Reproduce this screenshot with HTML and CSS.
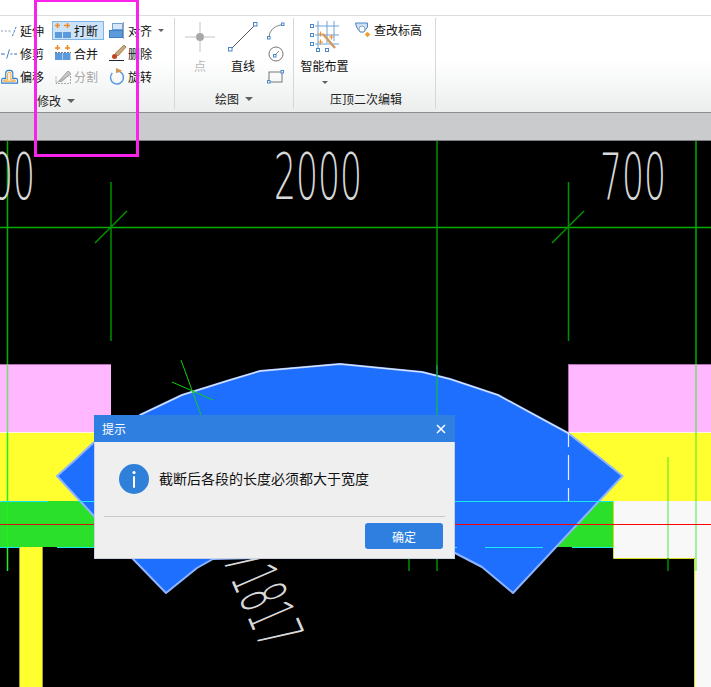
FILE: index.html
```html
<!DOCTYPE html>
<html lang="zh">
<head>
<meta charset="utf-8">
<title>打断</title>
<link rel="stylesheet" href="styles.css">
</head>
<body>
<div class="app">
  <div class="topstrip"></div>
  <div class="ribbon">
    <section class="group group-modify">
      <div class="tools-grid">
        <div class="tool"><svg class="ico" viewBox="0 0 18 18"><path d="M0 9h2M4 9h2M8 9h2" stroke="#7d8fa8" fill="none"/><path d="M12 14.500 16 4.500" stroke="#3d7cc9" stroke-dasharray="3 1" fill="none"/></svg><span>延伸</span></div>
        <div class="tool tool-active"><svg class="ico" viewBox="0 0 17 18"><path d="M0 3.500h5M9 3.500h6M2.500 1v5M12.500 1v5" stroke="#f08a20" stroke-width="1.500" fill="none"/><rect x="0" y="10" width="7" height="6" fill="#5b9bdc"/><rect x="8" y="10" width="8" height="6" fill="#5b9bdc"/></svg><span>打断</span></div>
        <div class="tool"><svg class="ico" viewBox="0 0 17 18"><rect x="3.500" y="1.500" width="10" height="6" fill="#d5e6f6" stroke="#6ea3d8"/><rect x="0.500" y="8.500" width="13" height="7" fill="#5b9bdc" stroke="#3f80c6"/><path d="M14.500 0v17" stroke="#9aa2aa"/></svg><span>对齐</span><i class="caret caret-small caret-inline"></i></div>
        <div class="tool"><svg class="ico" viewBox="0 0 18 18"><path d="M0 9h4M10 9h2M14 9h3" stroke="#2a5da8" fill="none"/><path d="M6 14 9 4" stroke="#2f7fd0" fill="none"/></svg><span>修剪</span></div>
        <div class="tool"><svg class="ico" viewBox="0 0 17 18"><path d="M2.500 0v5M12.500 0v5M0 3h5M10 3h5" stroke="#f08a20" stroke-width="1.500" fill="none"/><rect x="0" y="8" width="7.500" height="7" fill="#5b9bdc"/><rect x="8" y="8" width="7.500" height="7" fill="#5b9bdc"/><path d="M0 7.500h16" stroke="#777" stroke-dasharray="2 1"/></svg><span>合并</span></div>
        <div class="tool"><svg class="ico" viewBox="0 0 17 18"><path d="M15 0 17 2 9 11 6 8.500Z" fill="#c9a878" stroke="#7a5c34" stroke-width=".6"/><circle cx="5.500" cy="11.500" r="2.500" fill="#c2431c"/><path d="M0 15.500h15" stroke="#222"/></svg><span>删除</span></div>
        <div class="tool"><svg class="ico" viewBox="0 0 18 18"><path d="M0.800 15.500V12q0-1.500 1.500-1.500H5V5q0-3 3-3h1.500q3 0 3 3v5.500h3q2 0 2 2v3Z" fill="none" stroke="#2f7fd0" stroke-width="1.200"/><path d="M3 13.500V12.200H7V5.500q0-1.500 1.500-1.500h1q1 0 1 1.500v6.700H15v1.300Z" fill="#fff3d8" stroke="#f0a030"/></svg><span>偏移</span></div>
        <div class="tool tool-disabled"><svg class="ico" viewBox="0 0 17 18"><path d="M1 8.500V15.500H15.500V6" fill="none" stroke="#a8a8a8" stroke-dasharray="2 1"/><path d="M4 13 13 3l2.500 2L7 13.500Z" fill="#c8c8c8" stroke="#a0a0a0"/><path d="M1 15 15 7" stroke="#a8a8a8"/></svg><span>分割</span></div>
        <div class="tool"><svg class="ico" viewBox="0 0 17 18"><path d="M8 3a6.500 6.500 0 1 1-4.700 2" fill="none" stroke="#5b9bdc" stroke-width="1.500"/><path d="M7 0h1v5H7z" fill="#a0a0a0"/><path d="M8 0.500 13 2.500 8 5Z" fill="#f0902a"/></svg><span>旋转</span></div>
      </div>
      <div class="group-label group-label-modify"><span>修改</span><i class="caret"></i></div>
    </section>

    <section class="group group-draw">
      <div class="draw-tools">
        <div class="big-tool big-point"><svg class="big-ico" viewBox="0 0 32 32"><path d="M16 1v30M1 16h30" stroke="#c4c4c4" fill="none"/><circle cx="16" cy="16" r="4" fill="#a8a8a8"/></svg><span>点</span></div>
        <div class="big-tool big-line"><svg class="big-ico" viewBox="0 0 32 32"><path d="M3.500 28.500 28.500 3.500" stroke="#555" fill="none"/><rect x="1.500" y="26.500" width="3.500" height="3.500" fill="#fff" stroke="#4a86c8"/><rect x="26.500" y="1.500" width="3.500" height="3.500" fill="#fff" stroke="#4a86c8"/></svg><span>直线</span></div>
        <div class="mini-tools">
          <svg class="mini" viewBox="0 0 18 18"><path d="M2 16Q2 5 15 2.500" stroke="#888" fill="none"/><rect x="0.500" y="14.500" width="2.500" height="2.500" fill="#fff" stroke="#4a86c8"/><rect x="14.500" y="1" width="2.500" height="2.500" fill="#fff" stroke="#4a86c8"/></svg>
          <svg class="mini" viewBox="0 0 18 18"><circle cx="9" cy="9" r="7" fill="none" stroke="#777"/><path d="M8 10 12 6" stroke="#888"/><rect x="6.500" y="9.500" width="2.500" height="2.500" fill="#fff" stroke="#4a86c8"/></svg>
          <svg class="mini" viewBox="0 0 18 18"><rect x="2" y="4" width="13" height="10" fill="none" stroke="#777"/><rect x="0.500" y="12.500" width="2.500" height="2.500" fill="#fff" stroke="#4a86c8"/><rect x="14" y="2.500" width="2.500" height="2.500" fill="#fff" stroke="#4a86c8"/></svg>
        </div>
      </div>
      <div class="group-label group-label-draw"><span>绘图</span><i class="caret"></i></div>
    </section>

    <section class="group group-edit">
      <div class="edit-tools">
        <div class="big-tool big-smart">
          <svg class="smart-ico" viewBox="0 0 32 32"><path d="M6 5h24M6 14h24M6 23h24M9 0v30M18 0v22M25 0v20" stroke="#6ea3d8" fill="none"/><g fill="#fff" stroke="#4a86c8"><rect x="1.500" y="3.500" width="3" height="3"/><rect x="1.500" y="12.500" width="3" height="3"/><rect x="1.500" y="21.500" width="3" height="3"/><rect x="7.500" y="27.500" width="3" height="3"/><rect x="16.500" y="27.500" width="3" height="3"/></g><path d="M14 13 26 27" stroke="#d39a62" stroke-width="2.500"/><path d="M9 13h5M11.500 10.500v5M9 21h5M11.500 18.500v5M20 16h5M22.500 13.500v5" stroke="#f0902a" fill="none"/></svg>
          <span>智能布置</span><i class="caret caret-small"></i>
        </div>
        <div class="tool tool-check"><svg class="check-ico" viewBox="0 0 16 16"><path d="M0.500 1h12v4L9 10H5L1.500 5Z" fill="#cfe0f2" stroke="#4a86c8"/><circle cx="7" cy="7" r="3" fill="#fff" stroke="#8aa8c8"/><rect x="10.500" y="10.500" width="4" height="4" transform="rotate(45 12.500 12.500)" fill="#f0a030"/></svg><span>查改标高</span></div>
      </div>
      <div class="group-label group-label-edit"><span>压顶二次编辑</span></div>
    </section>
  </div>
  <div class="statusbar"></div>

  <main class="canvas">
    <svg class="drawing" viewBox="0 141 711 546" width="711" height="546">
      <rect class="pink-fill" x="0" y="364" width="111" height="68"/>
      <rect class="pink-fill" x="568" y="364" width="143" height="68"/>
      <path class="pink-edge" d="M0 364.500H111M568 364.500H711M568.500 364V432"/>
      <path class="seam" d="M0 432.500H111M568 432.500H711"/>
      <rect class="yellow-fill" x="0" y="433" width="130" height="68"/>
      <rect class="yellow-fill" x="540" y="433" width="171" height="68"/>
      <rect class="green-fill" x="0" y="501" width="613" height="46"/>
      <rect class="white-fill" x="614" y="501" width="97" height="57"/>
      <rect class="white-fill" x="695" y="558" width="16" height="129"/>
      <path class="yellow-edge" d="M613.500 501V558.500H694.500V687"/>
      <rect class="yellow-fill" x="20" y="547" width="22" height="140"/>
      <path class="olive-edge" d="M19.500 547V687M42.500 547V687"/>

      <path class="cad-green" d="M0 227.500H711"/>
      <path class="cad-green-2" d="M111 182V341M568.500 182V341M95 243 127 211M552 243 584 211"/>
      <path class="cad-green-2" d="M437 141V365M409 559V571M437 559V571M668 558V571"/>
      <path class="cad-green" d="M7.500 141V364M696 141V364"/>
      <path class="lt-pink" d="M7.500 364V433M696 364V433"/>
      <path class="lt-yellow" d="M696 433V501M668 457V501"/>
      <path class="lt-white" d="M696 501V571M668 501V558"/>
      <path class="lt-left" d="M7.500 433V571"/>

      <polygon class="blue-shape" points="57,476 75,460 93,443 140,415 182,395 230,380 260,371 340,364 422,372 450,379 498,395 544,420 568,433 600,458 622.500,476 513,593 482,567 455,553 213,559 197,568 166,593 133,559 93,515"/>
      <path class="blue-hi" d="M140 415 182 395 230 380 260 371 340 364 422 372 450 379 498 395 544 420 568 433"/>
      <path class="cad-bright" d="M181 360 201 415M172 382 213 400"/>
      <path class="lt-blue" d="M437 365V415"/>
      <path class="dash-white" d="M568.500 433V501"/>

      <path class="cyan" d="M0 501.500H48M78 501.500H100M455 501.500H613M0 547.500H20M57 547.500H100M455 547.500H457M485 547.500H543M572 547.500H613"/>
      <path class="red-dark" d="M0 524.500H94"/>
      <path class="red" d="M455 524.500H711"/>

      <g class="cad-text">
        <text transform="translate(-9 199) scale(.54 1)">00</text>
        <text transform="translate(274 199) scale(.54 1)">2000</text>
        <text transform="translate(600 199) scale(.54 1)">700</text>
        <text transform="translate(222 559) rotate(66.500) scale(.5 1)">71817</text>
      </g>
    </svg>
  </main>

  <div class="dialog" role="dialog">
    <header class="dialog-title"><span>提示</span><svg class="dialog-close" viewBox="0 0 10 10"><path d="M1 1 9 9M9 1 1 9" stroke="#fff" stroke-width="1.500"/></svg></header>
    <div class="dialog-body">
      <svg class="info" viewBox="0 0 30 30"><circle cx="15" cy="15" r="15" fill="#2f80d8"/><circle cx="15" cy="8.500" r="1.600" fill="#fff"/><rect x="14" y="12" width="2" height="12" rx="1" fill="#fff"/></svg>
      <p>截断后各段的长度必须都大于宽度</p>
    </div>
    <div class="dialog-foot"><button class="ok" type="button">确定</button></div>
  </div>

  <div class="highlight"></div>
</div>
</body>
</html>
```

FILE: styles.css
```css
* { box-sizing: border-box; }
html, body { margin: 0; padding: 0; background: #000; }
body { overflow: hidden; font-family: "Noto Sans CJK SC", "Liberation Sans", sans-serif; font-size: 12px; color: #111; }

.app { position: relative; width: 711px; height: 687px; display: flex; flex-direction: column; overflow: hidden; }
.topstrip { height: 16px; background: #fff; border-bottom: 1px solid #dcdcdc; }

.ribbon { display: flex; height: 97px; background: linear-gradient(#fff 0, #fff 45%, #eceeee 100%); border-bottom: 1px solid #8b8d8e; overflow: hidden; }
.statusbar { height: 28px; background: #c9cbcd; border-bottom: 1px solid #7c7e80; }

.group { position: relative; display: flex; flex-direction: column; border-right: 1px solid #d4d8d8; margin-top: 2px; height: 91px; }
.group-modify { width: 175px; overflow: hidden; }
.group-draw { width: 119px; }
.group-edit { width: 142px; }

.tools-grid { display: grid; grid-template-columns: 54px 54px 68px; grid-auto-rows: 23px; margin: 1px 0 0 -2px; height: 70px; }
.tool { display: flex; align-items: center; gap: 2px; height: 19px; margin-top: 2px; padding: 0 3px; white-space: nowrap; width: 52px; }
.tool span { line-height: 19px; }
.ico { width: 17px; height: 18px; flex: none; overflow: visible; }
.tool-active { background: #cde4f8; border: 1px solid #7eb4e6; padding: 0 2px; }
.tool-disabled span { color: #a8a8a8; }

.caret { display: inline-block; width: 0; height: 0; border-left: 4px solid transparent; border-right: 4px solid transparent; border-top: 4px solid #606060; }
.caret-small { border-left-width: 3px; border-right-width: 3px; border-top-width: 3px; }
.caret-inline { margin-left: 4px; flex: none; }

.group-label { display: flex; align-items: center; gap: 6px; height: 20px; line-height: 20px; color: #222; }
.group-label-modify { padding-left: 37px; margin-top: 3px; }
.group-label-draw { padding-left: 40px; margin-top: 3px; }
.group-label-edit { padding-left: 36px; margin-top: 5px; }

.draw-tools { display: flex; height: 70px; }
.big-tool { display: flex; flex-direction: column; align-items: center; }
.big-tool span { line-height: 18px; white-space: nowrap; }
.big-ico { width: 32px; height: 32px; margin-top: 3px; margin-bottom: 4px; }
.big-point { width: 50px; }
.big-point span { color: #b8b8b8; }
.big-line { width: 36px; }
.mini-tools { display: flex; flex-direction: column; gap: 5px; margin: 4px 0 0 6px; }
.mini { width: 18px; height: 18px; display: block; }

.edit-tools { display: flex; height: 71px; }
.big-smart { width: 61px; }
.smart-ico { width: 32px; height: 32px; margin-top: 3px; margin-bottom: 4px; }
.big-smart .caret { margin-top: 6px; }
.tool-check { width: auto; padding: 0; margin: 2px 0 0 0; gap: 3px; }
.check-ico { width: 16px; height: 16px; flex: none; }

.canvas { flex: 1; background: #000; min-height: 0; }
.drawing { display: block; }
.pink-fill { fill: #ffb8ff; }
.pink-edge { stroke: #b070b0; fill: none; }
.seam { stroke: #fff4e8; fill: none; }
.yellow-fill { fill: #ffff30; }
.green-fill { fill: #2ae02a; }
.white-fill { fill: #f8f8f8; }
.yellow-edge { stroke: #d8d820; fill: none; }
.olive-edge { stroke: #a0a030; fill: none; }
.cad-green { stroke: #00b000; stroke-width: 1.500; fill: none; }
.cad-green-2 { stroke: #009000; stroke-width: 1.500; fill: none; }
.cad-bright { stroke: #10d010; fill: none; }
.lt-pink { stroke: #70e070; stroke-width: 1.500; fill: none; }
.lt-yellow { stroke: #88f020; stroke-width: 1.500; fill: none; }
.lt-white { stroke: #80f080; stroke-width: 1.500; fill: none; }
.lt-left { stroke: #20f020; stroke-width: 1.500; fill: none; }
.lt-blue { stroke: #10b060; stroke-width: 1.500; fill: none; }
.blue-shape { fill: #1f6fff; stroke: #8fb4ff; stroke-width: 2; stroke-linejoin: round; }
.blue-hi { fill: none; stroke: #e4ecff; stroke-width: 1; }
.dash-white { stroke: #e8eeff; stroke-width: 1.200; stroke-dasharray: 14 8 25 8 14; fill: none; }
.cyan { stroke: #18e8f0; fill: none; }
.red { stroke: #ff0000; fill: none; }
.red-dark { stroke: #d81010; fill: none; }
.cad-text text { font-family: "DejaVu Sans", sans-serif; font-weight: 200; font-size: 64px; fill: #d8d8d8; }

.dialog { position: absolute; left: 94px; top: 415px; width: 361px; height: 144px; background: #efefef; border: 1px solid #c8d2e4; border-top: 0; display: flex; flex-direction: column; }
.dialog-title { height: 27px; margin: 0 -1px; background: #2e7fdf; color: #fff; font-size: 12px; display: flex; align-items: center; justify-content: space-between; padding: 0 9px 0 8px; }
.dialog-close { width: 10px; height: 10px; }
.dialog-body { display: flex; align-items: center; gap: 10px; height: 74px; padding: 0 0 0 24px; }
.info { width: 30px; height: 30px; flex: none; }
.dialog-body p { margin: 0 0 3px; font-size: 14px; line-height: 20px; color: #111; }
.dialog-foot { margin: 0 9px; border-top: 1px solid #c8c8c8; padding: 6px 2px 0 0; display: flex; justify-content: flex-end; }
.ok { width: 78px; height: 26px; border: 0; border-radius: 3px; background: #2e7fdf; color: #fff; font: inherit; font-size: 12px; padding: 0; }

.highlight { position: absolute; left: 34px; top: 0; width: 105px; height: 157px; border: 3px solid #f922e8; border-top-width: 2px; pointer-events: none; }
```
